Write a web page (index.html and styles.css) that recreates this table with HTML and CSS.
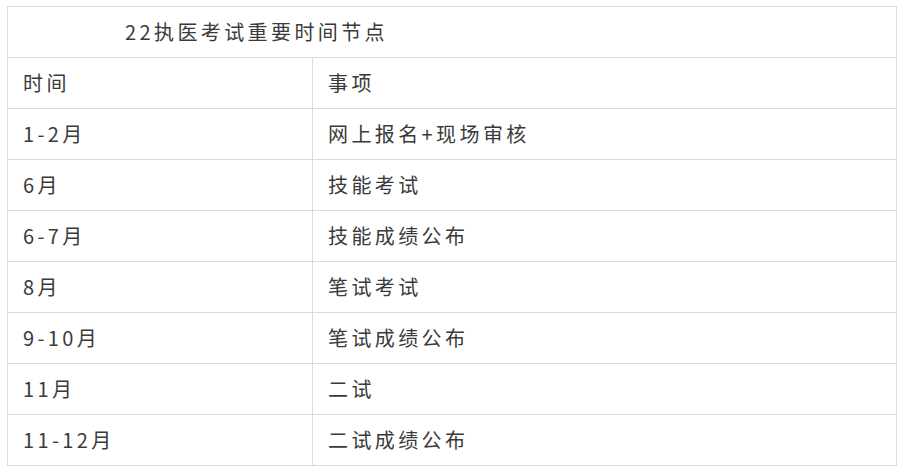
FILE: index.html
```html
<!DOCTYPE html>
<html lang="zh">
<head>
<meta charset="utf-8">
<link rel="stylesheet" href="styles.css">
</head>
<body>
<div class="wrap">
<table class="sched">
  <tr><td class="title" colspan="2">22执医考试重要时间节点</td></tr>
  <tr><td class="c1">时间</td><td class="c2">事项</td></tr>
  <tr><td class="c1">1-2月</td><td class="c2">网上报名+现场审核</td></tr>
  <tr><td class="c1">6月</td><td class="c2">技能考试</td></tr>
  <tr><td class="c1">6-7月</td><td class="c2">技能成绩公布</td></tr>
  <tr><td class="c1">8月</td><td class="c2">笔试考试</td></tr>
  <tr><td class="c1">9-10月</td><td class="c2">笔试成绩公布</td></tr>
  <tr><td class="c1">11月</td><td class="c2">二试</td></tr>
  <tr><td class="c1">11-12月</td><td class="c2">二试成绩公布</td></tr>
</table>
</div>
</body>
</html>
```
FILE: styles.css
```css
html, body { margin: 0; padding: 0; background: #fff; }
.wrap { padding: 6px 7px; }
.sched {
  border-collapse: collapse;
  width: 890px;
  font-family: "Noto Sans CJK SC", "Noto Sans", sans-serif;
  font-size: 20px;
  letter-spacing: 3.4px;
  color: #3a3a3a;
}
.sched td {
  border: 1px solid #dcdcdc;
  height: 51px;
  padding: 0 0 0 15px;
  box-sizing: border-box;
  vertical-align: middle;
  line-height: 1;
}
.sched .c1 { width: 305px; }
.sched .title { padding-left: 117px; }
```
